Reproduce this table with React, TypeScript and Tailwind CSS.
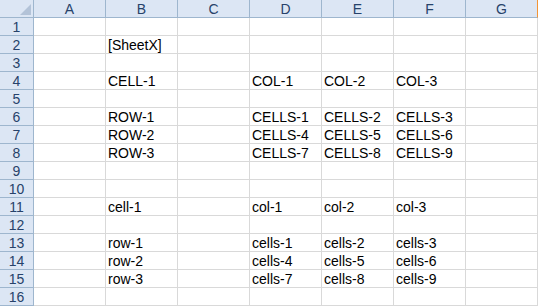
import React from "react";

const COLS = ["A", "B", "C", "D", "E", "F", "G"];

// sheet contents keyed by row number, then column letter
const DATA: Record<number, Record<string, string>> = {
  2: { B: "[SheetX]" },
  4: { B: "CELL-1", D: "COL-1", E: "COL-2", F: "COL-3" },
  6: { B: "ROW-1", D: "CELLS-1", E: "CELLS-2", F: "CELLS-3" },
  7: { B: "ROW-2", D: "CELLS-4", E: "CELLS-5", F: "CELLS-6" },
  8: { B: "ROW-3", D: "CELLS-7", E: "CELLS-8", F: "CELLS-9" },
  11: { B: "cell-1", D: "col-1", E: "col-2", F: "col-3" },
  13: { B: "row-1", D: "cells-1", E: "cells-2", F: "cells-3" },
  14: { B: "row-2", D: "cells-4", E: "cells-5", F: "cells-6" },
  15: { B: "row-3", D: "cells-7", E: "cells-8", F: "cells-9" },
};

const rows = Array.from({ length: 16 }, (_, i) => i + 1);

const App: React.FC = () => {
  return (
    <div
      className="w-[538px] h-[307px] bg-white overflow-hidden text-[14px] leading-none text-black"
      style={{ fontFamily: '"Liberation Sans", Arial, "Noto Sans CJK JP", sans-serif' }}
    >
      <div className="grid grid-cols-[34px_repeat(7,72px)] auto-rows-[18px]">
        {/* Corner */}
        <div className="relative bg-[#dce6f4] border-r border-b border-[#9eb6ce]">
          <svg className="absolute right-[2px] bottom-[2px]" width="11" height="11" viewBox="0 0 11 11">
            <polygon points="11,0 11,11 0,11" fill="#b3c3d8" />
          </svg>
        </div>

        {/* Column headers */}
        {COLS.map((c) => (
          <div
            key={c}
            className={`flex items-end justify-center pb-[1px] bg-[#dce6f4] border-b border-[#9eb6ce] text-[#27426a] ${
              c === "G" ? "border-r border-r-[#f29436]" : "border-r"
            }`}
          >
            {c}
          </div>
        ))}

        {rows.map((r) => (
          <React.Fragment key={r}>
            <div className="flex items-end justify-center pb-[1px] bg-[#dce6f4] border-r border-b border-[#9eb6ce] text-[#27426a]">
              {r}
            </div>
            {COLS.map((c) => (
              <div
                key={c}
                className="flex items-end pl-[2px] pb-[1px] border-r border-b border-[#d9d9d9] whitespace-nowrap"
              >
                {DATA[r]?.[c] ?? ""}
              </div>
            ))}
          </React.Fragment>
        ))}
      </div>
    </div>
  );
};

export default App;
